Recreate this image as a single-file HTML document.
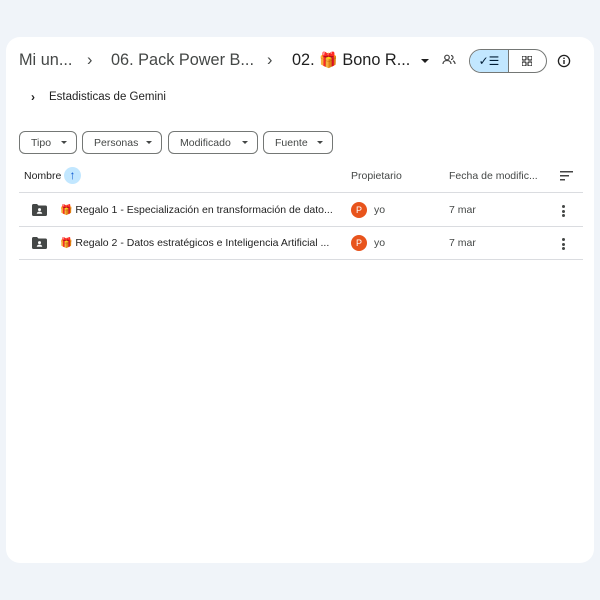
<!DOCTYPE html>
<html><head><style>
*{margin:0;padding:0;box-sizing:border-box}
body{width:600px;height:600px;background:#f0f4f9;font-family:"Liberation Sans",sans-serif;color:#1f1f1f;position:relative;overflow:hidden}
.card{position:absolute;left:6px;top:37px;width:588px;height:526px;background:#fff;border-radius:14px}
.a{position:absolute;white-space:nowrap}
.bc{font-size:16.3px;color:#444746;top:51px}
.chip{position:absolute;top:131px;height:23px;border:1px solid #747775;border-radius:6px;font-size:10.5px;color:#444746;padding:0 0 0 11px;line-height:22px}
.chip:after{content:"";position:absolute;right:9px;top:9px;border:3px solid transparent;border-top:3px solid #444746}
.hd{font-size:10.5px;color:#444746;top:170px}
.line{position:absolute;left:19px;width:564px;height:1px;background:#dadce0}
.row{font-size:10.5px;color:#1f1f1f}
.av{position:absolute;width:16px;height:16px;border-radius:50%;background:#e8541c;color:#fff;font-size:9px;text-align:center;line-height:16px}
.dots{position:absolute;width:3px;}
.dots i{display:block;width:3px;height:3px;border-radius:50%;background:#444746;margin-bottom:1.5px}
</style></head><body>
<div class="card"></div>
<div class="a bc" style="left:19px">Mi un...</div>
<div class="a bc" style="left:87px">›</div>
<div class="a bc" style="left:111px">06. Pack Power B...</div>
<div class="a bc" style="left:267px">›</div>
<div class="a bc" style="left:292px;color:#1f1f1f">02. <span style="color:#e85d2a;font-size:15px">🎁</span> Bono R...</div>
<div class="a" style="left:421px;top:59px;border:4px solid transparent;border-top:4px solid #1f1f1f"></div>
<svg class="a" style="left:442px;top:54px" width="14" height="12" viewBox="0 0 14 12"><circle cx="5" cy="3.5" r="2.3" fill="none" stroke="#444" stroke-width="1.2"/><path d="M1 10c0-2.5 2-3.5 4-3.5s4 1 4 3.5M9 1.5a2 2 0 010 4M11 6.8c1 .5 2 1.5 2 3.2" fill="none" stroke="#444" stroke-width="1.2"/></svg>
<div class="a" style="left:469px;top:49px;width:78px;height:24px;border:1px solid #747775;border-radius:12px;overflow:hidden">
<div style="position:absolute;left:0;top:0;width:39px;height:22px;background:#c2e7ff;border-right:1px solid #747775;font-size:12px;line-height:22px;text-align:center;color:#001d35">✓☰</div>
<svg style="position:absolute;left:52px;top:6px" width="10" height="10"><rect x="0" y="0" width="4" height="4" rx="1" fill="none" stroke="#333" stroke-width="1.2"/><rect x="6" y="0" width="4" height="4" rx="1" fill="none" stroke="#333" stroke-width="1.2"/><rect x="0" y="6" width="4" height="4" rx="1" fill="none" stroke="#333" stroke-width="1.2"/><rect x="6" y="6" width="4" height="4" rx="1" fill="none" stroke="#333" stroke-width="1.2"/></svg>
</div>
<svg class="a" style="left:557px;top:54px" width="14" height="14"><circle cx="7" cy="7" r="5.6" fill="none" stroke="#1f1f1f" stroke-width="1.3"/><rect x="6.3" y="6" width="1.4" height="4" fill="#1f1f1f"/><rect x="6.3" y="3.6" width="1.4" height="1.4" fill="#1f1f1f"/></svg>
<div class="a" style="left:31px;top:90px;font-size:12px;font-weight:bold">›</div>
<div class="a" style="left:49px;top:91px;font-size:11.5px">Estadisticas de Gemini</div>
<div class="chip" style="left:19px;width:58px">Tipo</div>
<div class="chip" style="left:82px;width:80px">Personas</div>
<div class="chip" style="left:168px;width:90px">Modificado</div>
<div class="chip" style="left:263px;width:70px">Fuente</div>
<div class="a hd" style="left:24px;color:#1f1f1f">Nombre</div>
<div class="a" style="left:64px;top:167px;width:17px;height:17px;border-radius:50%;background:#c2e7ff;color:#0b57d0;font-size:12px;text-align:center;line-height:17px;font-weight:bold">↑</div>
<div class="a hd" style="left:351px">Propietario</div>
<div class="a hd" style="left:449px">Fecha de modific...</div>
<svg class="a" style="left:560px;top:171px" width="13" height="10"><rect x="0" y="0" width="13" height="1.5" fill="#444"/><rect x="0" y="4" width="9" height="1.5" fill="#444"/><rect x="0" y="8" width="5" height="1.5" fill="#444"/></svg>
<div class="line" style="top:192px"></div>
<div class="line" style="top:226px"></div>
<div class="line" style="top:259px"></div>
<svg class="a" style="left:32px;top:204px" width="15" height="12"><path d="M0 1.5C0 .7.6 0 1.4 0H5l1.5 1.5h7.1c.8 0 1.4.6 1.4 1.4v7.7c0 .8-.6 1.4-1.4 1.4H1.4C.6 12 0 11.4 0 10.6Z" fill="#444746"/><circle cx="7.5" cy="5.6" r="1.5" fill="#fff"/><path d="M4.8 9.8c0-1.5 1.3-2.2 2.7-2.2s2.7.7 2.7 2.2Z" fill="#fff"/></svg>
<svg class="a" style="left:32px;top:237px" width="15" height="12"><path d="M0 1.5C0 .7.6 0 1.4 0H5l1.5 1.5h7.1c.8 0 1.4.6 1.4 1.4v7.7c0 .8-.6 1.4-1.4 1.4H1.4C.6 12 0 11.4 0 10.6Z" fill="#444746"/><circle cx="7.5" cy="5.6" r="1.5" fill="#fff"/><path d="M4.8 9.8c0-1.5 1.3-2.2 2.7-2.2s2.7.7 2.7 2.2Z" fill="#fff"/></svg>
<div class="a row" style="left:60px;top:204px"><span style="font-size:10px">🎁</span> Regalo 1 - Especialización en transformación de dato...</div>
<div class="a row" style="left:60px;top:237px"><span style="font-size:10px">🎁</span> Regalo 2 - Datos estratégicos e Inteligencia Artificial ...</div>
<div class="av" style="left:351px;top:202px">P</div><div class="a row" style="left:374px;top:204px;color:#444746">yo</div>
<div class="av" style="left:351px;top:235px">P</div><div class="a row" style="left:374px;top:237px;color:#444746">yo</div>
<div class="a row" style="left:449px;top:204px;color:#444746">7 mar</div>
<div class="a row" style="left:449px;top:237px;color:#444746">7 mar</div>
<div class="dots" style="left:562px;top:205px"><i></i><i></i><i></i></div>
<div class="dots" style="left:562px;top:238px"><i></i><i></i><i></i></div>
</body></html>
